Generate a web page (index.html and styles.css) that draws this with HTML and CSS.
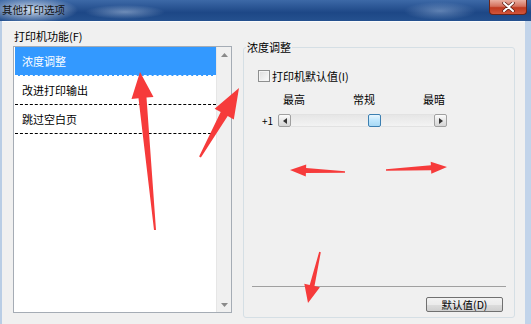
FILE: index.html
```html
<!DOCTYPE html>
<html lang="zh-CN">
<head>
  <meta charset="UTF-8">
  <title>其他打印选项</title>
  <link rel="stylesheet" href="styles.css">
</head>
<body>
  <div class="window">
    <div class="titlebar">
      <span class="title">其他打印选项</span>
      <div class="close-btn">
        <svg width="13" height="10" viewBox="0 0 13 10">
          <path d="M2 1 L11 9 M11 1 L2 9" stroke="#5a1c12" stroke-width="3.4" stroke-linecap="round"/>
          <path d="M2 1 L11 9 M11 1 L2 9" stroke="#ffffff" stroke-width="2" stroke-linecap="round"/>
        </svg>
      </div>
    </div>

    <div class="frame">
      <div class="client">
        <div class="features">
          <div class="label">打印机功能(F)</div>
          <div class="listbox">
            <ul class="items">
              <li class="item selected">浓度调整</li>
              <li class="item">改进打印输出</li>
              <li class="item">跳过空白页</li>
            </ul>
            <div class="scrollbar">
              <svg width="7" height="4" viewBox="0 0 7 4"><path d="M0 4 L3.5 0 L7 4 Z" fill="#8a8a8a"/></svg>
              <svg width="7" height="4" viewBox="0 0 7 4"><path d="M0 0 L3.5 4 L7 0 Z" fill="#8a8a8a"/></svg>
            </div>
          </div>
        </div>

        <fieldset class="group">
          <legend>浓度调整</legend>
          <label class="check-row">
            <span class="checkbox"></span>
            <span>打印机默认值(I)</span>
          </label>
          <div class="scale-labels">
            <span>最高</span>
            <span>常规</span>
            <span>最暗</span>
          </div>
          <div class="slider-row">
            <span class="value">+1</span>
            <div class="slider">
              <span class="slider-btn">
                <svg width="4" height="6" viewBox="0 0 4 6"><path d="M4 0 L0 3 L4 6 Z" fill="#333"/></svg>
              </span>
              <span class="track track-left"></span>
              <span class="thumb"></span>
              <span class="track track-right"></span>
              <span class="slider-btn">
                <svg width="4" height="6" viewBox="0 0 4 6"><path d="M0 0 L4 3 L0 6 Z" fill="#333"/></svg>
              </span>
            </div>
          </div>
          <div class="spacer"></div>
          <div class="separator"></div>
          <button class="btn">默认值(D)</button>
        </fieldset>
      </div>
    </div>
  </div>

  <!-- red annotation arrows drawn over the dialog -->
  <svg class="arrows" width="531" height="324" viewBox="0 0 531 324">
    <polygon points="156,230 146.5,97.5 153.5,97 140,72 131.5,99 138.5,98.3 154,230"/>
    <polygon points="200.9,157.5 227.7,116.1 233.8,119.5 239,88 214.6,108.7 220.7,112.1 199.1,156.5"/>
    <polygon points="345,171.2 306.1,168.1 306.2,164.6 290,170 305.8,176.6 305.9,173.1 345,172.8"/>
    <polygon points="386,170.8 431.1,170.3 431.3,173.8 447,167 430.7,161.8 430.9,165.3 386,169.2"/>
    <polygon points="320.8,252.2 314.5,286.1 319.9,287.3 308,303 304.3,283.7 309.7,284.9 319.2,251.8"/>
  </svg>
</body>
</html>
```

FILE: styles.css
```css
body {
  margin: 0;
  width: 531px;
  height: 324px;
  overflow: hidden;
  position: relative;
  font-family: "Noto Sans CJK SC", "Liberation Sans", sans-serif;
  font-size: 11px;
  color: #000;
  background: #c2d4ea;
}

.window {
  display: flex;
  flex-direction: column;
  height: 324px;
}

/* title bar */
.titlebar {
  height: 21px;
  display: flex;
  align-items: flex-start;
  background:
    radial-gradient(ellipse 48px 13px at 30px 10px, rgba(222, 232, 245, 0.95), rgba(222, 232, 245, 0)),
    radial-gradient(ellipse 40px 7px at 125px 12px, rgba(190, 208, 232, 0.5), rgba(190, 208, 232, 0)),
    radial-gradient(ellipse 36px 9px at 440px 11px, rgba(170, 195, 228, 0.45), rgba(170, 195, 228, 0)),
    linear-gradient(#3d69a7, #1d4786 60%, #25518f);
}

.title {
  padding: 3px 0 0 2px;
  line-height: 14px;
  font-size: 10.5px;
  color: #111;
}

.close-btn {
  margin-left: auto;
  margin-right: 4px;
  width: 36px;
  height: 14px;
  border: 1px solid #6b2418;
  border-top: none;
  border-radius: 0 0 4px 4px;
  background: linear-gradient(#eab0a2, #d4705c 45%, #c0391f 55%, #d2563c);
  display: flex;
  align-items: center;
  justify-content: center;
}

/* window body */
.frame {
  flex: 1;
  display: flex;
  border-left: 2px solid #b9cde5;
  border-right: 6px solid #c2d4ea;
}

.client {
  flex: 1;
  display: flex;
  gap: 11px;
  padding: 6px 10px 0 11px;
  background: #f0f0f0;
  border-top: 1px solid #fbfbfb;
}

.features {
  width: 219px;
}

.label {
  line-height: 16px;
  padding-left: 1px;
  margin-bottom: 2px;
}

.listbox {
  height: 265px;
  display: flex;
  background: #fff;
  border: 1px solid #a5acb5;
}

.items {
  flex: 1;
  list-style: none;
  margin: 0;
  padding: 0 0 0 1px;
}

.item {
  height: 28px;
  line-height: 28px;
  padding-left: 7px;
  border-bottom: 1px dashed #000;
}

.item.selected {
  background: #3399ff;
  color: #fff;
  border-bottom-color: #fff;
}

.scrollbar {
  width: 14px;
  background: #f0f0f0;
  border-left: 1px solid #e6e6e6;
  display: flex;
  flex-direction: column;
  align-items: center;
  justify-content: space-between;
  padding: 6px 0 5px;
}

/* density group */
.group {
  margin: 12px 0 0;
  padding: 0;
  width: 270px;
  height: 276px;
  border: 1px solid #d5dfe5;
  border-radius: 3px;
  display: flex;
  flex-direction: column;
}

.group legend {
  margin-left: 2px;
  padding: 0 1px;
  line-height: 14px;
}

.check-row {
  margin-top: 14px;
  padding-left: 14px;
  display: flex;
  align-items: center;
  gap: 2px;
  line-height: 16px;
}

.checkbox {
  width: 10px;
  height: 10px;
  border: 1px solid #8e8f8f;
  background: linear-gradient(135deg, #dcdcdc, #fbfbfb);
  box-shadow: inset 0 0 0 1px #f4f4f4;
}

.scale-labels {
  margin-top: 7px;
  padding-left: 39px;
  display: flex;
  gap: 48px;
  line-height: 16px;
}

.scale-labels span {
  width: 22px;
}

.slider-row {
  margin-top: 6px;
  padding-left: 18px;
  display: flex;
  align-items: center;
}

.value {
  width: 16px;
  font-size: 10px;
}

.slider {
  width: 169px;
  height: 13px;
  display: flex;
}

.slider-btn {
  width: 11px;
  height: 11px;
  border: 1px solid #a0a0a0;
  border-radius: 2px;
  background: linear-gradient(#fcfcfc, #e6e6e6 50%, #d6d6d6);
  display: flex;
  align-items: center;
  justify-content: center;
}

.track {
  height: 11px;
  border-top: 1px solid #e2e2e2;
  border-bottom: 1px solid #e2e2e2;
  background: linear-gradient(#e6e6e6, #f3f3f3);
}

.track-left {
  width: 77px;
}

.track-right {
  flex: 1;
}

.thumb {
  width: 11px;
  height: 11px;
  border: 1px solid #3c7fb1;
  border-radius: 2px;
  background: linear-gradient(#eaf6fd, #bee6fd 50%, #a7d9f5);
}

.spacer {
  flex: 1;
}

.separator {
  margin: 0 8px;
  height: 1px;
  background: #a0a0a0;
}

.btn {
  align-self: flex-end;
  margin: 10px 11px 5px 0;
  width: 77px;
  height: 15px;
  padding: 0;
  font-family: inherit;
  font-size: 10.5px;
  line-height: 13px;
  color: #000;
  border: 1px solid #707070;
  border-radius: 2px;
  background: linear-gradient(#f2f2f2, #ebebeb 50%, #dddddd 51%, #cfcfcf);
}

/* annotation overlay */
.arrows {
  position: absolute;
  left: 0;
  top: 0;
  pointer-events: none;
}

.arrows polygon {
  fill: #f63b3b;
}
```
